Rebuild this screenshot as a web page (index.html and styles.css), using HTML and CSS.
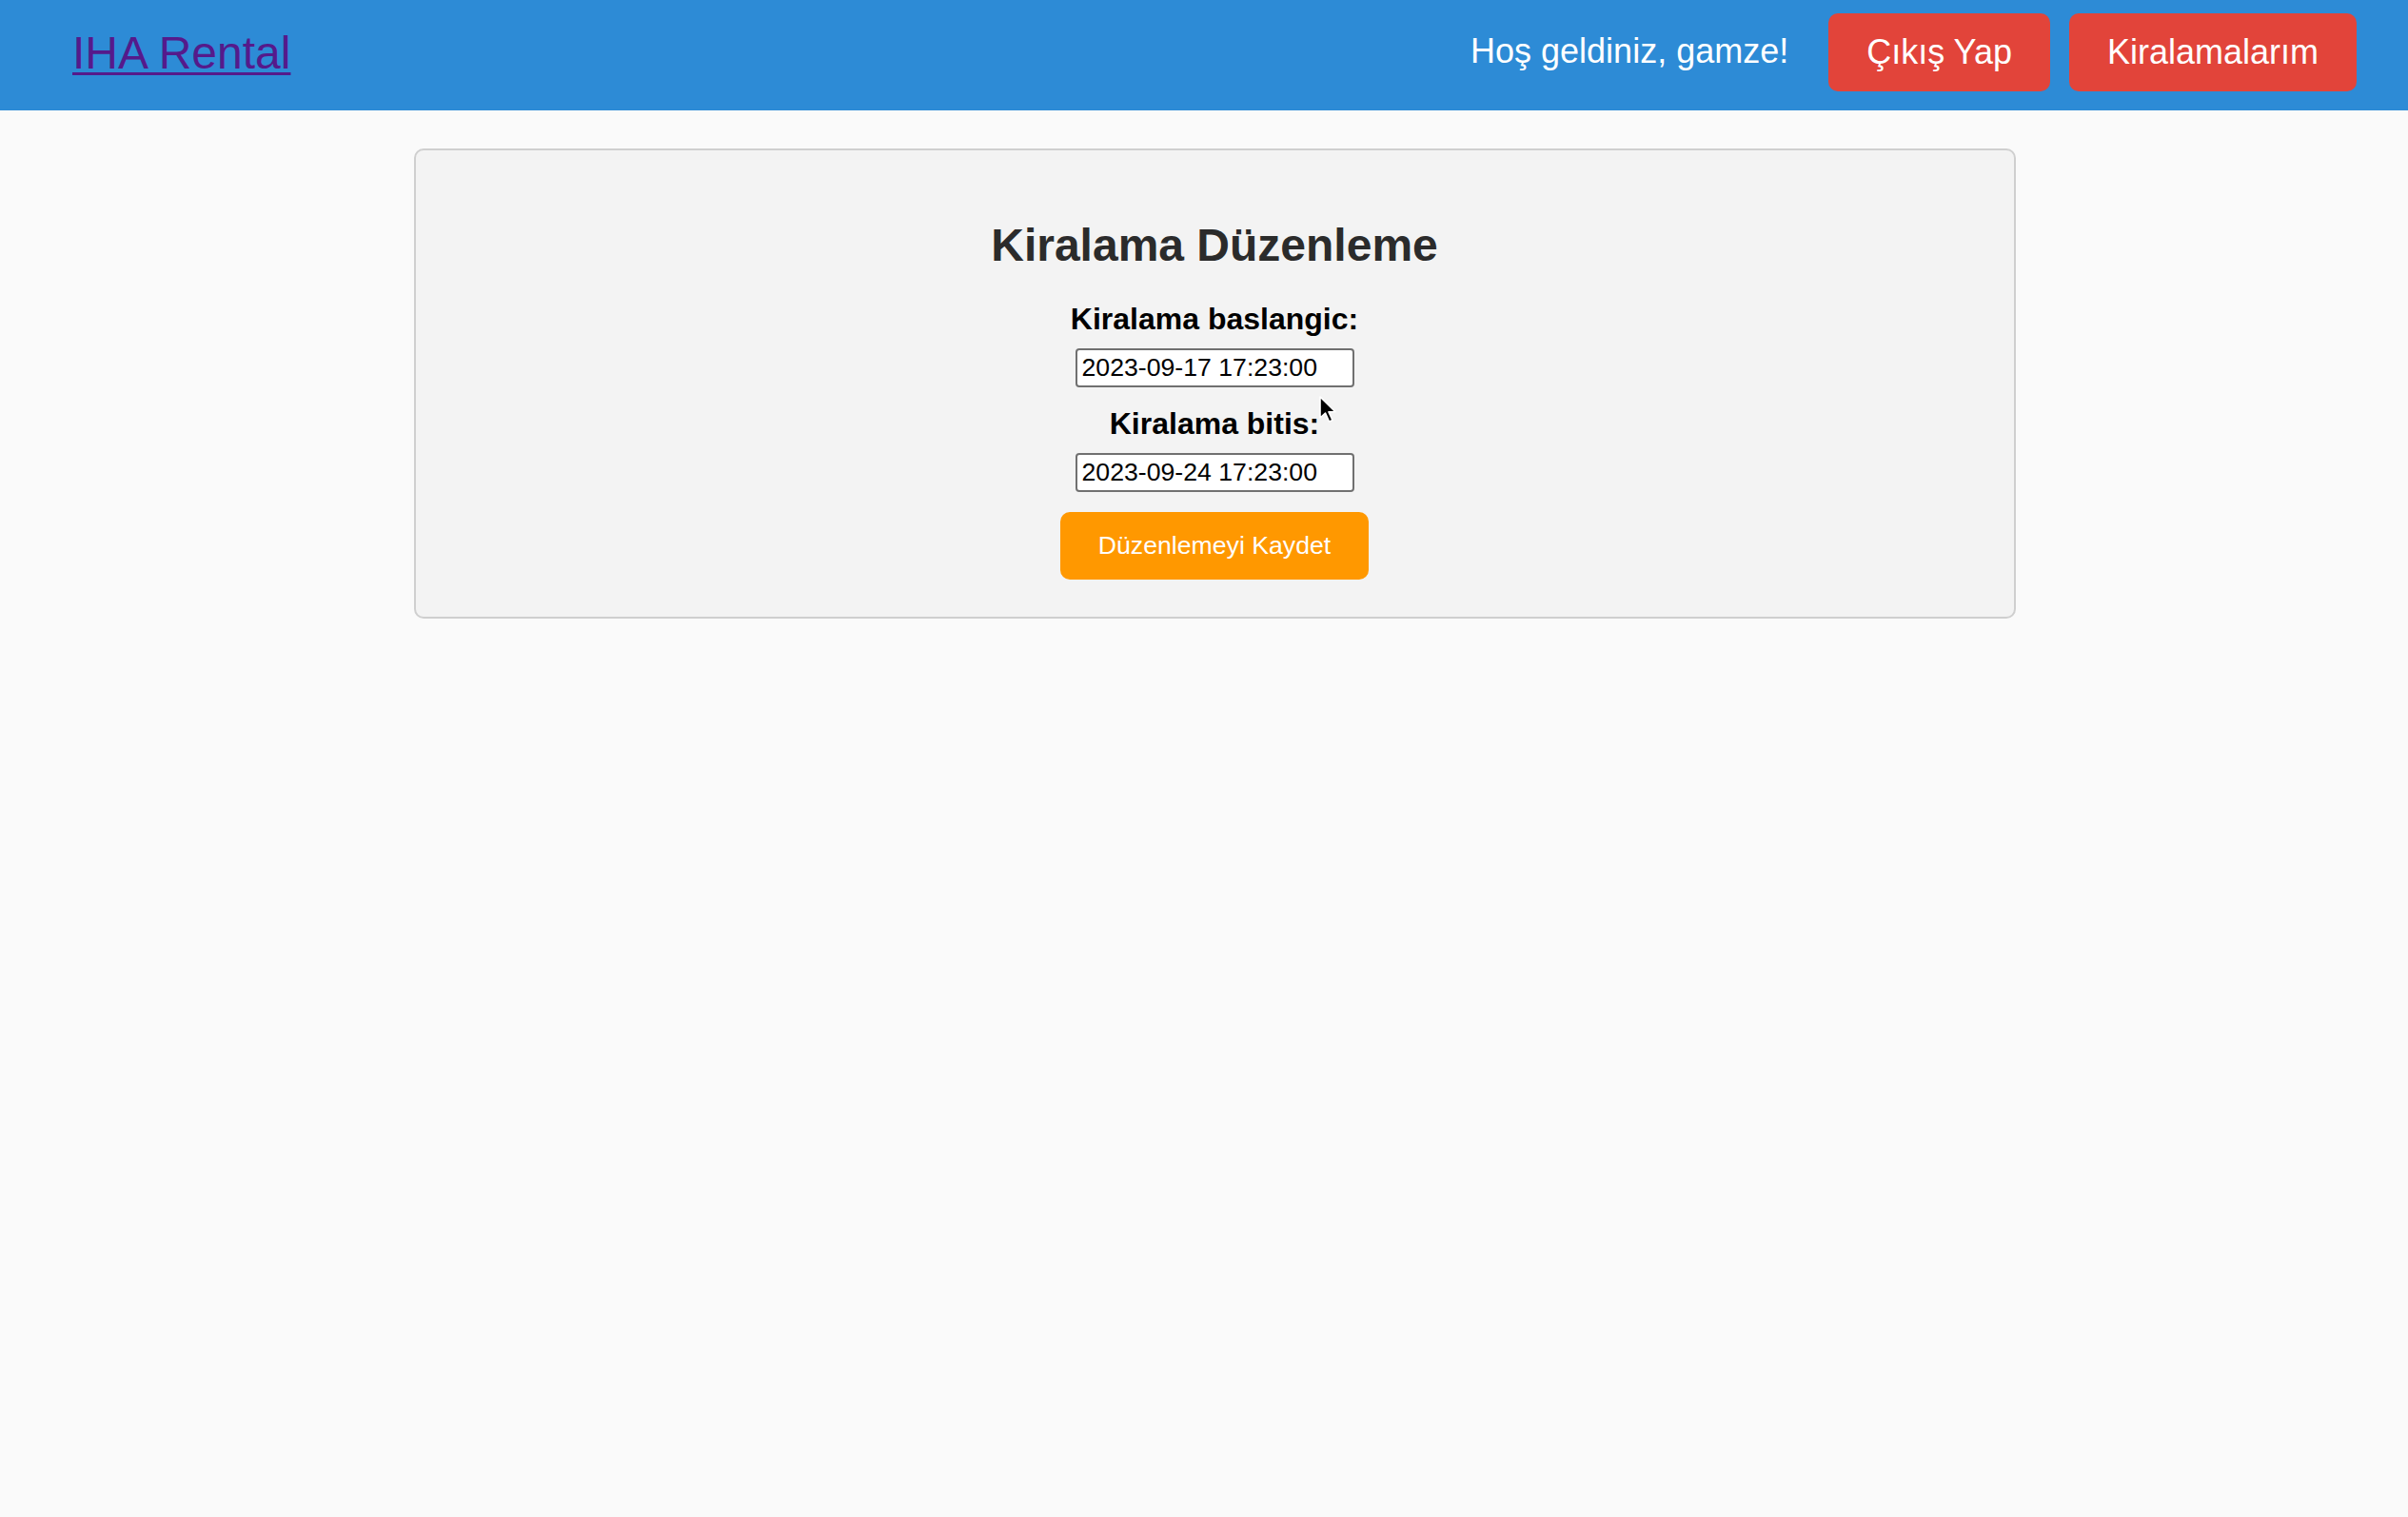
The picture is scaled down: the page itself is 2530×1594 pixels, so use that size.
FILE: index.html
```html
<!DOCTYPE html>
<html lang="tr">
<head>
<meta charset="utf-8">
<title>IHA Rental</title>
<link rel="stylesheet" href="styles.css">
</head>
<body>
<header class="topbar">
  <a class="logo" href="#">IHA Rental</a>
  <nav class="nav">
    <span class="welcome">Hoş geldiniz, gamze!</span>
    <a class="nav-btn" href="#">Çıkış Yap</a>
    <a class="nav-btn" href="#">Kiralamalarım</a>
  </nav>
</header>
<main class="main">
  <section class="card">
    <h2 class="title">Kiralama Düzenleme</h2>
    <form class="form">
      <label class="label" for="start">Kiralama baslangic:</label>
      <input class="field" id="start" type="text" value="2023-09-17 17:23:00">
      <label class="label" for="end">Kiralama bitis:</label>
      <input class="field field-last" id="end" type="text" value="2023-09-24 17:23:00">
      <button class="save" type="button">Düzenlemeyi Kaydet</button>
    </form>
  </section>
</main>
<svg class="cursor" width="19" height="30" viewBox="0 0 19 30" aria-hidden="true">
  <path d="M2 2 L2 24 L7.5 19 L11.5 28 L15 26.5 L11 17.8 L18 17.8 Z" fill="#000" stroke="#fff" stroke-width="1.6" stroke-linejoin="round"/>
</svg>
</body>
</html>
```

FILE: styles.css
```css
html, body {
  margin: 0;
  padding: 0;
}

body {
  background: #fafafa;
  font-family: "Liberation Sans", Arial, sans-serif;
  min-height: 1594px;
  position: relative;
}

.topbar {
  box-sizing: border-box;
  height: 116px;
  background: #2d8bd6;
  display: flex;
  align-items: center;
  justify-content: space-between;
  padding: 14px 54px 20px 76px;
}

.logo {
  font-size: 48px;
  color: #551a8b;
  text-decoration: underline;
  text-decoration-thickness: 3px;
  text-underline-offset: 4px;
}

.nav {
  display: flex;
  align-items: center;
}

.welcome {
  font-size: 36px;
  color: #ffffff;
  margin-right: 42px;
  margin-bottom: 2px;
}

.nav-btn {
  display: inline-block;
  font-size: 36px;
  line-height: normal;
  color: #ffffff;
  background: #e2443a;
  text-decoration: none;
  border-radius: 10px;
  padding: 20px 40px 20px;
  margin-left: 20px;
}

.nav-btn:first-of-type {
  margin-left: 0;
}

.main {
  padding: 40px 0 0 22px;
}

.card {
  box-sizing: border-box;
  width: 1683px;
  margin: 0 auto;
  background: #f3f3f3;
  border: 2px solid #cfcfcf;
  border-radius: 10px;
  padding: 40px 40px 39px;
  text-align: center;
}

.title {
  font-size: 48px;
  font-weight: bold;
  color: #2b2b2b;
  margin: 32px 0 32px;
}

.form {
  display: flex;
  flex-direction: column;
  align-items: center;
}

.label {
  display: block;
  font-size: 32px;
  font-weight: bold;
  color: #000;
  margin-bottom: 12px;
}

.field {
  box-sizing: border-box;
  width: 293px;
  height: 41px;
  border: 2px solid #707070;
  border-radius: 4px;
  background: #ffffff;
  color: #000;
  font-family: "Liberation Sans", Arial, sans-serif;
  font-size: 26.67px;
  padding: 0 5px;
  margin: 0 0 20px;
}

.field-last {
  margin-bottom: 21px;
}

.save {
  font-family: "Liberation Sans", Arial, sans-serif;
  font-size: 26.67px;
  color: #ffffff;
  background: #ff9800;
  border: none;
  border-radius: 10px;
  padding: 20px 40px;
  cursor: pointer;
}

.cursor {
  position: absolute;
  left: 1385px;
  top: 415px;
}
```
